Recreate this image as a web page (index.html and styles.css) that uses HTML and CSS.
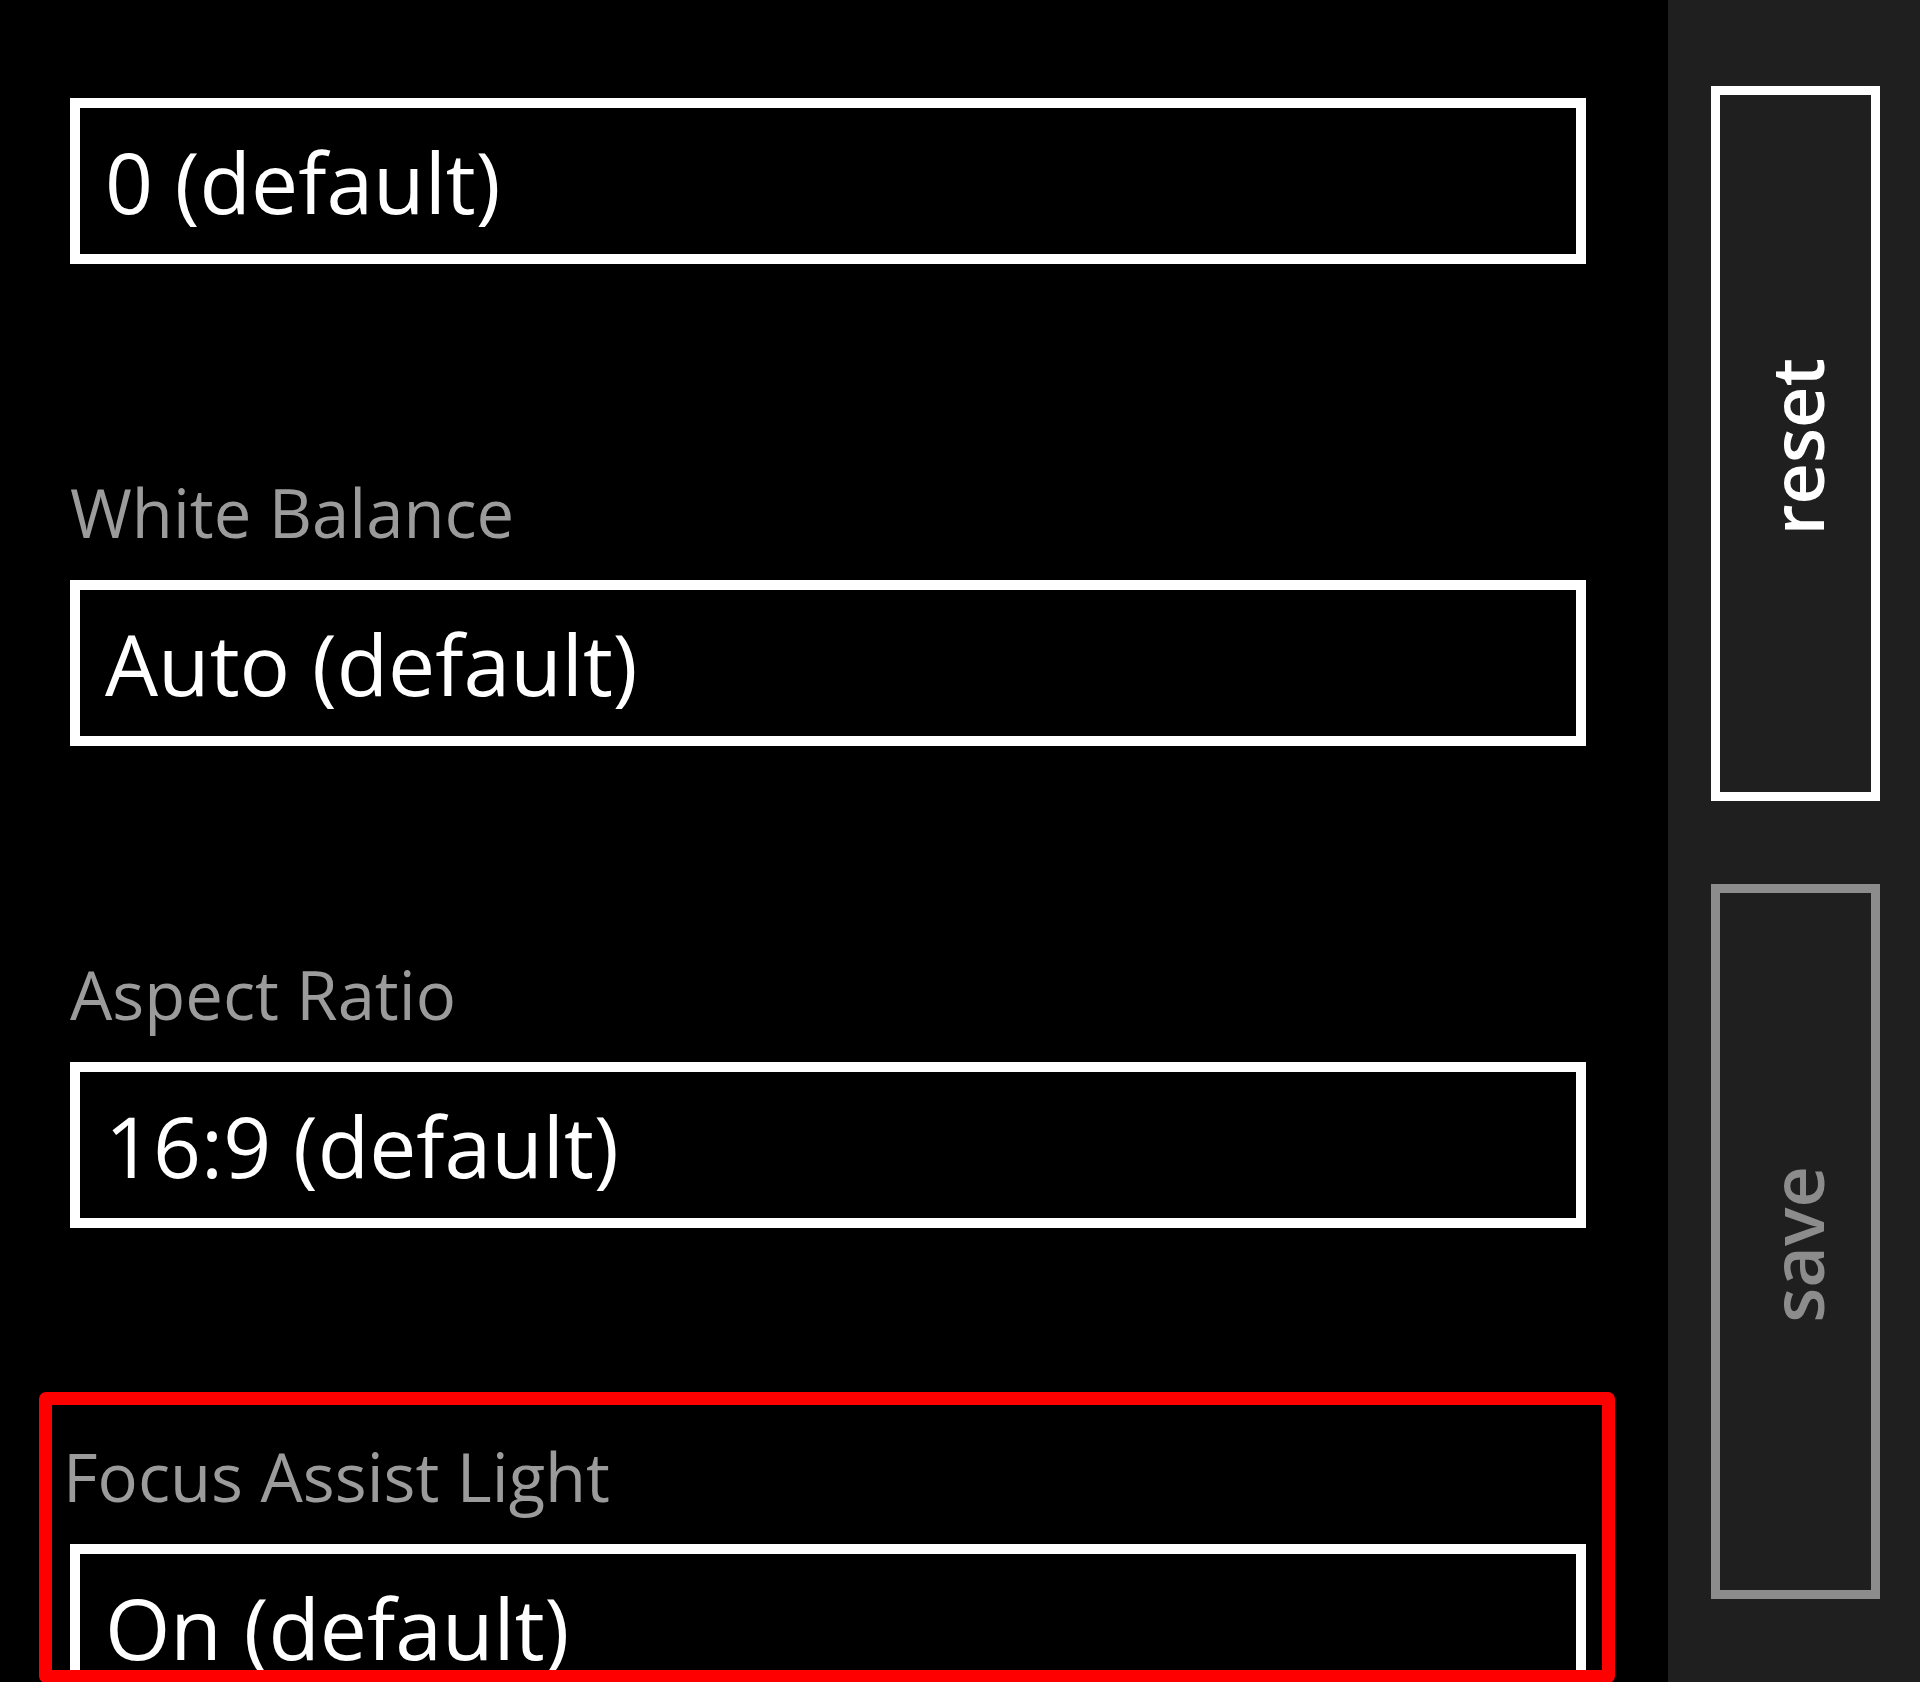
FILE: index.html
```html
<!DOCTYPE html>
<html lang="en">
<head>
<meta charset="utf-8">
<title>Camera settings</title>
<link rel="stylesheet" href="styles.css">
</head>
<body>
<div class="screen">
  <main class="settings">
    <div class="field">
      <div class="select">0 (default)</div>
    </div>
    <div class="field">
      <div class="label">White Balance</div>
      <div class="select">Auto (default)</div>
    </div>
    <div class="field">
      <div class="label">Aspect Ratio</div>
      <div class="select">16:9 (default)</div>
    </div>
    <div class="field highlighted">
      <div class="label">Focus Assist Light</div>
      <div class="select">On (default)</div>
    </div>
  </main>
  <aside class="appbar">
    <button class="bar-btn"><span class="bar-text">reset</span></button>
    <button class="bar-btn disabled"><span class="bar-text">save</span></button>
  </aside>
</div>
</body>
</html>
```

FILE: styles.css
```css
html, body {
  margin: 0;
  padding: 0;
  background: #000;
  height: 1682px;
  overflow: hidden;
}

.screen {
  display: flex;
  height: 1682px;
  overflow: hidden;
  font-family: "Open Sans", "Noto Sans", sans-serif;
}

.settings {
  flex: 0 0 1668px;
  box-sizing: border-box;
  padding: 98px 0 0 70px;
  background: #000;
}

.field {
  width: 1516px;
}

.field + .field {
  margin-top: 208px;
}

.label {
  font-size: 67px;
  line-height: 80px;
  color: #9b9b9b;
  margin-bottom: 28px;
  white-space: nowrap;
}

.select {
  box-sizing: border-box;
  height: 166px;
  border: 10px solid #fff;
  padding-left: 25px;
  display: flex;
  align-items: center;
  font-size: 84px;
  color: #fff;
  white-space: nowrap;
}

.highlighted {
  position: relative;
}

.highlighted .label {
  margin-left: -7px;
}

.highlighted::after {
  content: "";
  position: absolute;
  top: -44px;
  left: -31px;
  right: -29px;
  bottom: 27px;
  border: 13px solid #ff0000;
  border-radius: 7px;
  pointer-events: none;
}

.appbar {
  flex: 1;
  background: #1f1f1f;
  display: flex;
  flex-direction: column;
  align-items: flex-start;
  gap: 83px;
  padding: 86px 0 0 43px;
}

.bar-btn {
  box-sizing: border-box;
  width: 169px;
  height: 715px;
  border: 9px solid #fff;
  background: transparent;
  color: #fff;
  padding: 0;
  display: flex;
  align-items: center;
  justify-content: center;
  font-family: "Open Sans", "Noto Sans", sans-serif;
  font-weight: 600;
  font-size: 72px;
}

.bar-btn.disabled {
  border-color: #8c8c8c;
  color: #8c8c8c;
}

.bar-text {
  writing-mode: vertical-rl;
  transform: rotate(180deg);
  line-height: 1;
  margin-top: 6px;
}
```
